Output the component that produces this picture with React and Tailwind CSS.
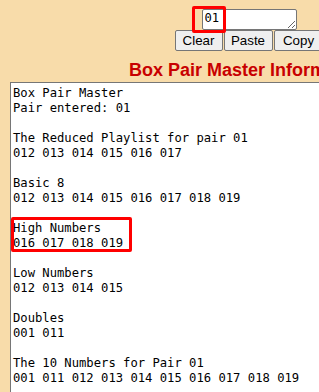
import React from "react";

const lines = [
  "Box Pair Master",
  "Pair entered: 01",
  "",
  "The Reduced Playlist for pair 01",
  "012 013 014 015 016 017",
  "",
  "Basic 8",
  "012 013 014 015 016 017 018 019",
  "",
  "High Numbers",
  "016 017 018 019",
  "",
  "Low Numbers",
  "012 013 014 015",
  "",
  "Doubles",
  "001 011",
  "",
  "The 10 Numbers for Pair 01",
  "001 011 012 013 014 015 016 017 018 019",
  "",
];

const mono = { fontFamily: '"DejaVu Sans Mono", monospace' };

export default function App() {
  return (
    <div className="relative w-[319px] h-[392px] overflow-hidden bg-[#f8dcaa]">
      <div
        className="w-[498px] flex flex-col items-center pt-[9px]"
        style={{ fontFamily: '"Liberation Sans", Arial, sans-serif' }}
      >
        <textarea
          readOnly
          rows={1}
          defaultValue="01"
          className="block w-[95px] h-[21px] bg-white border border-[#767676] rounded-[2px] px-[2px] py-[1px] text-[12.2px] leading-[15px] text-black outline-none resize overflow-hidden"
          style={mono}
        />
        <div className="flex gap-[1px] mt-0">
          <button className="w-[48px] h-[21px] bg-[#efefef] border border-[#767676] rounded-[2px] text-[13.33px] leading-[15px] text-black">
            Clear
          </button>
          <button className="w-[49px] h-[21px] bg-[#efefef] border border-[#767676] rounded-[2px] text-[13.33px] leading-[15px] text-black">
            Paste
          </button>
          <button className="w-[50px] h-[21px] bg-[#efefef] border border-[#767676] rounded-[2px] text-[13.33px] leading-[15px] text-black">
            Copy
          </button>
        </div>
        <h1 className="mt-[9px] text-[18px] leading-[21px] font-bold text-[#c80000] whitespace-nowrap">
          Box Pair Master Information
        </h1>
      </div>
      <div
        className="ml-[10px] mt-[1px] w-[477px] h-[400px] bg-white border border-[#767676] pl-[2px] pt-[3px] text-[12.2px] leading-[15px] text-black whitespace-pre overflow-hidden"
        style={mono}
      >
        {lines.map((l, i) => (
          <div key={i} className="h-[15px]">
            {l}
          </div>
        ))}
      </div>
      <div className="absolute left-[192px] top-[6px] w-[34px] h-[27px] border-[3px] border-[#ff0000] rounded-[2px]" />
      <div className="absolute left-[11px] top-[217px] w-[121px] h-[35px] border-[3px] border-[#ff0000] rounded-[2px]" />
    </div>
  );
}
